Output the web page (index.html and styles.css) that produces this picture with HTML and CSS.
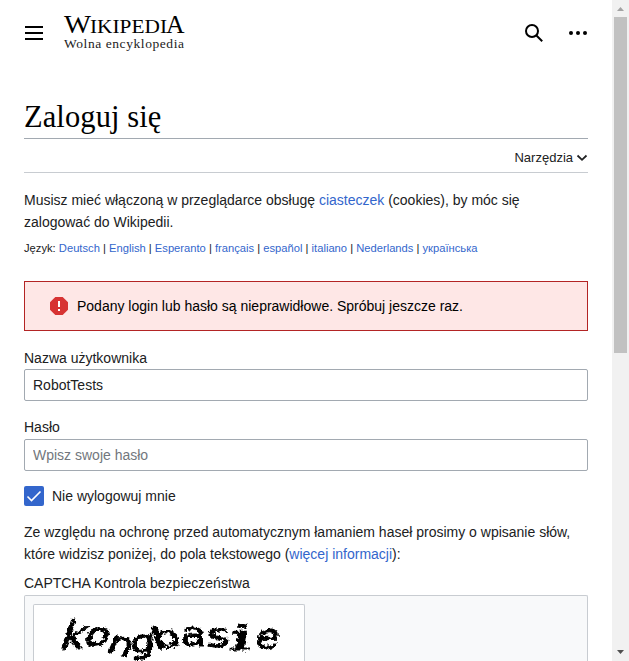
FILE: index.html
```html
<!DOCTYPE html>
<html lang="pl">
<head>
<meta charset="utf-8">
<title>Zaloguj się – Wikipedia, wolna encyklopedia</title>
<link rel="stylesheet" href="styles.css">
</head>
<body>
<div class="page">
  <header class="header">
    <svg class="menu" width="20" height="20" viewBox="0 0 20 20"><path d="M1 3h18v2H1zM1 9h18v2H1zM1 15h18v2H1z"/></svg>
    <svg class="logo" width="122" height="40" viewBox="0 0 122 40" role="img" aria-label="Wikipedia">
      <text class="word" y="22.500"><tspan x="0" font-size="26" textLength="27" lengthAdjust="spacingAndGlyphs">W</tspan><tspan x="26" font-size="19" textLength="77" lengthAdjust="spacingAndGlyphs">IKIPEDI</tspan><tspan x="102" font-size="26" textLength="18.500" lengthAdjust="spacingAndGlyphs">A</tspan></text>
      <text class="tagline" x="0" y="37.500" font-size="13.500" textLength="120" lengthAdjust="spacing">Wolna encyklopedia</text>
    </svg>
    <svg class="search" width="20" height="20" viewBox="0 0 20 20"><circle cx="8" cy="8" r="6" /><path d="m12.2 12.2 6 6"/></svg>
    <svg class="more" width="20" height="20" viewBox="0 0 20 20"><circle cx="3" cy="10" r="2"/><circle cx="10" cy="10" r="2"/><circle cx="17" cy="10" r="2"/></svg>
  </header>
  <main class="content">
    <h1>Zaloguj się</h1>
    <div class="toolbar"><span>Narzędzia</span><svg width="12" height="8" viewBox="0 0 12 8"><path d="m1.500 1.500 4.500 4.300 4.500-4.300"/></svg></div>
    <p class="intro">Musisz mieć włączoną w przeglądarce obsługę <a>ciasteczek</a> (cookies), by móc się zalogować do Wikipedii.</p>
    <p class="languages">Język: <a>Deutsch</a> | <a>English</a> | <a>Esperanto</a> | <a>français</a> | <a>español</a> | <a>italiano</a> | <a>Nederlands</a> | <a>українська</a></p>
    <div class="error">
      <svg width="20" height="20" viewBox="0 0 20 20"><path class="badge" d="M13.7 1H6.3L1 6.3v7.4L6.3 19h7.4l5.3-5.3V6.3z"/><path class="mark" d="M9 5h2v6H9zM9 13h2v2H9z"/></svg>
      <span>Podany login lub hasło są nieprawidłowe. Spróbuj jeszcze raz.</span>
    </div>
    <label class="label" for="name">Nazwa użytkownika</label>
    <input class="field" id="name" type="text" value="RobotTests">
    <label class="label second" for="password">Hasło</label>
    <input class="field" id="password" type="password" placeholder="Wpisz swoje hasło">
    <div class="remember">
      <svg width="20" height="20" viewBox="0 0 20 20"><rect width="20" height="20" rx="2"/><path d="m3.500 10.500 4 4 9-9"/></svg>
      <span>Nie wylogowuj mnie</span>
    </div>
    <p class="notice">Ze względu na ochronę przed automatycznym łamaniem haseł prosimy o wpisanie słów, które widzisz poniżej, do pola tekstowego (<a>więcej informacji</a>):</p>
    <div class="captcha-label">CAPTCHA Kontrola bezpieczeństwa</div>
    <div class="captcha">
      <div class="captcha-image">
        <svg width="270" height="56" viewBox="0 0 270 56">
          <defs><filter id="rough" x="-5%" y="-10%" width="110%" height="130%"><feTurbulence type="fractalNoise" baseFrequency="0.3" numOctaves="2" seed="9" result="n"/><feDisplacementMap in="SourceGraphic" in2="n" scale="6" xChannelSelector="R" yChannelSelector="G"/><feGaussianBlur stdDeviation="0.6"/></filter></defs>
          <g filter="url(#rough)" class="glyphs">
            <text transform="translate(24 44) rotate(-3) skewX(-22)" font-size="38" textLength="24" lengthAdjust="spacingAndGlyphs">k</text>
            <text transform="translate(48 40) rotate(3) skewX(-18)" font-size="33" textLength="25" lengthAdjust="spacingAndGlyphs">o</text>
            <text transform="translate(71 46) rotate(16) skewX(-8)" font-size="33" textLength="25" lengthAdjust="spacingAndGlyphs">n</text>
            <text transform="translate(96 49) rotate(-7) skewX(-10)" font-size="31" textLength="25" lengthAdjust="spacingAndGlyphs">g</text>
            <text transform="translate(121 44) rotate(-8) skewX(10)" font-size="30" textLength="28" lengthAdjust="spacingAndGlyphs">b</text>
            <text transform="translate(147 41)" font-size="34" textLength="25" lengthAdjust="spacingAndGlyphs">a</text>
            <text transform="translate(173 42) rotate(-2)" font-size="32" textLength="23" lengthAdjust="spacingAndGlyphs">s</text>
            <text class="serifed" transform="translate(194 45) skewX(-10)" font-size="36" textLength="22" lengthAdjust="spacingAndGlyphs">i</text>
            <text transform="translate(220 44) rotate(-3) skewX(-14)" font-size="34" textLength="23" lengthAdjust="spacingAndGlyphs">e</text>
          </g>
        </svg>
      </div>
    </div>
  </main>
</div>
<div class="scrollbar">
  <svg width="17" height="17" viewBox="0 0 17 17"><path fill="#a3a3a3" d="M5 11h7L8.500 7z"/></svg>
  <div class="thumb"></div>
  <svg class="down" width="17" height="17" viewBox="0 0 17 17"><path fill="#505050" d="M5 6h7l-3.500 4z"/></svg>
</div>
</body>
</html>
```
FILE: styles.css
```css
* { box-sizing: border-box; }
html, body { height: 100%; }
body {
  margin: 0;
  display: flex;
  height: 661px;
  overflow: hidden;
  background: #fff;
  color: #202122;
  font: 14px/22px "Liberation Sans", Arial, sans-serif;
}
svg { display: block; flex: none; }
a { color: #3366cc; }
p { margin: 0; }
.page { flex: 1; min-width: 0; padding: 0 24px; }
.header { display: flex; align-items: center; height: 66px; }
.logo { margin: -6px auto 0 20px; overflow: visible; }
.word, .tagline { font-family: "Liberation Serif", serif; fill: #000; }
.tagline { fill: #222; }
.search { margin-right: 24px; fill: none; stroke: #000; stroke-width: 2; }
.content { display: flex; flex-direction: column; }
h1 {
  height: 44px;
  margin: 29px 0 0;
  padding-top: 3px;
  border-bottom: 1px solid #a2a9b1;
  color: #000;
  font: 30.500px/38px "Liberation Serif", serif;
  letter-spacing: 0.1px;
}
.toolbar {
  display: flex;
  justify-content: flex-end;
  align-items: center;
  gap: 3px;
  height: 34px;
  padding-top: 4px;
  border-bottom: 1px solid #c8ccd1;
  font-size: 13px;
}
.toolbar path { fill: none; stroke: #202122; stroke-width: 1.800; }
.intro { margin-top: 16px; }
.languages { margin-top: 5px; font-size: 11.200px; line-height: 20px; white-space: nowrap; }
.error {
  display: flex;
  align-items: center;
  gap: 8px;
  height: 50px;
  margin-top: 23px;
  padding-left: 24px;
  border: 1px solid #b32424;
  background: #fee7e6;
  color: #000;
}
.badge { fill: #d73333; }
.mark { fill: #fff; }
.label { margin-top: 16px; }
.second { margin-top: 15px; }
.field {
  width: 100%;
  height: 32px;
  padding: 0 8px;
  border: 1px solid #a2a9b1;
  border-radius: 2px;
  background: #fff;
  color: #202122;
  font: inherit;
}
.second + .field { margin-top: 1px; }
.field::placeholder { color: #72777d; opacity: 1; }
.remember { display: flex; gap: 8px; align-items: center; height: 20px; margin-top: 15px; }
.remember rect { fill: #3366cc; }
.remember path { fill: none; stroke: #fff; stroke-width: 1.600; }
.notice { margin-top: 15px; }
.captcha-label { margin-top: 7px; }
.captcha {
  height: 66px;
  margin-top: 1px;
  padding: 8px 8px 0;
  border: 1px solid #c8ccd1;
  border-bottom: 0;
  border-radius: 2px 2px 0 0;
  background: #f8f9fa;
}
.captcha-image {
  width: 272px;
  height: 57px;
  overflow: hidden;
  border: 1px solid #c8ccd1;
  border-bottom: 0;
  border-radius: 2px 2px 0 0;
  background: #fff;
}
.glyphs { fill: #000; font-family: "DejaVu Sans", sans-serif; }
.glyphs text { stroke: #000; stroke-width: 1.100; }
.glyphs .serifed { font-family: "DejaVu Serif", serif; }
.scrollbar { display: flex; flex-direction: column; flex: none; width: 17px; height: 661px; background: #f1f1f1; }
.thumb { width: 13px; height: 336px; margin-left: 2px; background: #c1c1c1; }
.down { margin-top: auto; }
```
